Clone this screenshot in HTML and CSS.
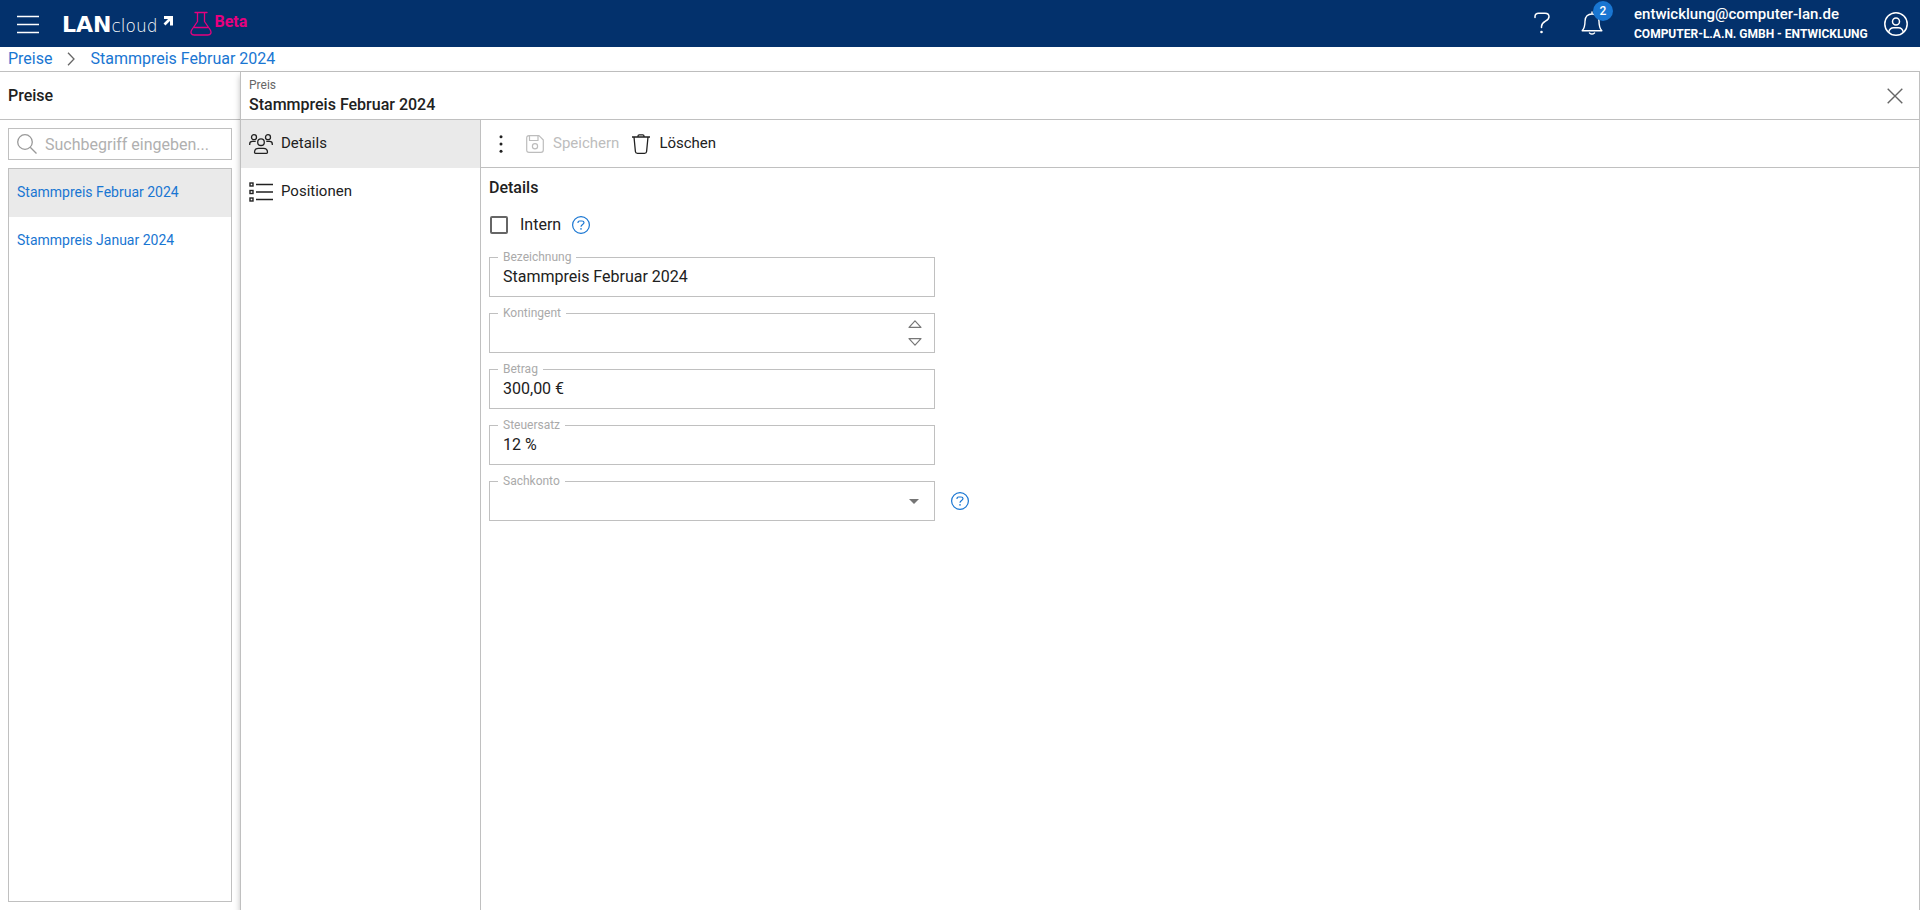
FILE: index.html
```html
<!DOCTYPE html>
<html lang="de">
<head>
<meta charset="utf-8">
<title>LANcloud – Stammpreis Februar 2024</title>
<link rel="stylesheet" href="styles.css">
</head>
<body>
<header class="topbar">
  <button class="icon-btn menu-btn" aria-label="Menü">
    <svg width="24" height="20" viewBox="0 0 24 20" fill="none" stroke="currentColor" stroke-width="1.4"><path d="M1 2.500h22M1 10.500h22M1 18.500h22"/></svg>
  </button>
  <a class="logo" href="#"><span class="logo-lan">LAN</span><span class="logo-cloud">cloud</span>
    <svg class="logo-arrow" width="10" height="10" viewBox="0 0 10 10" fill="none" stroke="currentColor"><path d="M1 1.500H8.500V9.500" stroke-width="3"/><path d="M1.500 8.500L7.500 2.500" stroke-width="2.600"/></svg>
  </a>
  <span class="beta">
    <svg width="22" height="25" viewBox="0 0 22 25" fill="none" stroke="currentColor" stroke-width="1.3" stroke-linecap="round" stroke-linejoin="round"><path d="M5 1.500H17M7.500 1.500V10.500L2 18.500C0 21.500 1.200 24 4.200 24H17.800C20.800 24 22 21.500 20 18.500L14.500 10.500V1.500M4.500 16.500H17.500"/></svg>
    <span class="beta-text">Beta</span>
  </span>
  <div class="topbar-right">
    <button class="icon-btn help-btn" aria-label="Hilfe">
      <svg width="18" height="22" viewBox="0 0 18 22" fill="none" stroke="currentColor" stroke-width="1.500" stroke-linecap="round"><path d="M2 5.500V4.500C2 2.500 3.500 1.200 5.500 1.200H12C14.500 1.200 16 2.700 16 4.700C16 9.500 8.500 9 8.500 14.500V15.500"/><circle cx="8.500" cy="20" r="1.300" fill="currentColor" stroke="none"/></svg>
    </button>
    <button class="icon-btn bell-btn" aria-label="Benachrichtigungen">
      <svg width="22" height="24" viewBox="0 0 22 24" fill="none" stroke="currentColor" stroke-width="1.400" stroke-linecap="round" stroke-linejoin="round"><path d="M11 1V3M1.200 19.800C3.200 17.500 4 15.500 4 10.200C4 5.500 7 3 11 3S18 5.500 18 10.200C18 15.500 18.800 17.500 20.800 19.800ZM8.500 22C10 23.300 12 23.300 13.500 22"/></svg>
      <span class="badge">2</span>
    </button>
    <div class="account"><span class="account-mail">entwicklung@computer-lan.de</span><span class="account-org">COMPUTER-L.A.N. GMBH - ENTWICKLUNG</span></div>
    <button class="icon-btn" aria-label="Konto">
      <svg width="24" height="24" viewBox="0 0 24 24" fill="none" stroke="currentColor" stroke-width="1.500"><circle cx="12" cy="12" r="11.200"/><circle cx="12" cy="9.500" r="3.500"/><path d="M4.700 20C5.500 17 7.500 15.800 9.500 15.800H14.500C16.500 15.800 18.500 17 19.300 20"/></svg>
    </button>
  </div>
</header>

<nav class="breadcrumb" aria-label="Brotkrumen">
  <a href="#">Preise</a>
  <svg width="8" height="14" viewBox="0 0 8 14" fill="none" stroke="currentColor" stroke-width="1.300"><path d="M1 .8L7 7L1 13.200"/></svg>
  <a href="#">Stammpreis Februar 2024</a>
</nav>

<div class="workspace">
  <aside class="master">
    <h2 class="master-title">Preise</h2>
    <div class="master-body">
      <label class="search">
        <svg width="20" height="20" viewBox="0 0 20 20" fill="none" stroke="currentColor" stroke-width="1.300"><circle cx="8" cy="8" r="7.300"/><path d="M13.200 13.200L19.500 19.500"/></svg>
        <input type="text" aria-label="Suche" placeholder="Suchbegriff eingeben...">
      </label>
      <div class="price-list">
        <a class="price-item selected" href="#">Stammpreis Februar 2024</a>
        <a class="price-item" href="#">Stammpreis Januar 2024</a>
      </div>
    </div>
  </aside>

  <main class="detail">
    <div class="detail-head">
      <div class="heading"><div class="kind">Preis</div><h1 class="detail-title">Stammpreis Februar 2024</h1></div>
      <button class="icon-btn close-btn" aria-label="Schließen">
        <svg width="16" height="16" viewBox="0 0 16 16" fill="none" stroke="currentColor" stroke-width="1.400"><path d="M.7 .7L15.300 15.300M15.300 .7L.7 15.300"/></svg>
      </button>
    </div>
    <div class="detail-body">
      <nav class="sections" aria-label="Bereiche">
        <a class="section-link selected" href="#">
          <svg width="24" height="20" viewBox="0 0 24 20" fill="none" stroke="currentColor" stroke-width="1.300"><circle cx="5" cy="3.200" r="2.500"/><circle cx="19" cy="3.200" r="2.500"/><circle cx="12" cy="8.200" r="3.300"/><path d="M.7 11V10C.7 8.300 2 7.400 3.500 7.400H6.700M23.300 11V10C23.300 8.300 22 7.400 20.500 7.400H17.300M5.500 18.300C5.500 15.500 7 14.300 9.500 14.300H14.500C17 14.300 18.500 15.500 18.500 18.300C18.500 19 18.200 19.300 17.500 19.300H6.500C5.800 19.300 5.500 19 5.500 18.300Z"/></svg>
          <span class="caption">Details</span>
        </a>
        <a class="section-link" href="#">
          <svg width="24" height="20" viewBox="0 0 24 20" fill="none" stroke="currentColor" stroke-width="1.400"><rect x="1" y="1" width="3" height="3"/><rect x="1" y="8.500" width="3" height="3"/><rect x="1" y="16" width="3" height="3"/><path d="M7 2.500H24M7 10H24M7 17.500H24"/></svg>
          <span class="caption">Positionen</span>
        </a>
      </nav>
      <div class="content">
        <div class="toolbar">
          <button class="icon-btn more-btn" aria-label="Mehr">
            <svg width="4" height="18" viewBox="0 0 4 18" fill="currentColor"><circle cx="2" cy="1.700" r="1.500"/><circle cx="2" cy="9" r="1.500"/><circle cx="2" cy="16.300" r="1.500"/></svg>
          </button>
          <button class="tool-btn save-btn" disabled>
            <svg width="18" height="18" viewBox="0 0 18 18" fill="none" stroke="currentColor" stroke-width="1.200" stroke-linejoin="round"><path d="M3 .7H13L17.300 5V15C17.300 16.500 16.500 17.300 15 17.300H3C1.500 17.300 .7 16.500 .7 15V3C.7 1.500 1.500 .7 3 .7ZM3.500 .7V5.500H12V.7"/><circle cx="9" cy="11.300" r="2.600"/></svg>
            <span class="caption">Speichern</span>
          </button>
          <button class="tool-btn delete-btn">
            <svg width="18" height="20" viewBox="0 0 18 20" fill="none" stroke="currentColor" stroke-width="1.300" stroke-linejoin="round"><path d="M0 3H18M6 3V2C6 1.200 6.500 .8 7.200 .8H10.800C11.500 .8 12 1.200 12 2V3M2 3L3.400 17.500C3.500 18.800 4.200 19.300 5.500 19.300H12.500C13.800 19.300 14.500 18.800 14.600 17.500L16 3"/></svg>
            <span class="caption">Löschen</span>
          </button>
        </div>
        <form class="form">
          <h2 class="form-title">Details</h2>
          <div class="check-row">
            <input type="checkbox" id="intern"><label for="intern">Intern</label>
            <button type="button" class="icon-btn hint" aria-label="Hilfe zu Intern">
              <svg width="18" height="18" viewBox="0 0 18 18" fill="none" stroke="currentColor" stroke-width="1.200"><circle cx="9" cy="9" r="8.400"/><path d="M6 7V6.500C6 5.500 6.500 5 7.500 5H10C11.300 5 12 5.600 12 6.500C12 8.500 9 8.300 9 10.700"/><circle cx="9" cy="12.900" r=".8" fill="currentColor" stroke="none"/></svg>
            </button>
          </div>
          <div class="field"><label for="bez">Bezeichnung</label><input id="bez" type="text" value="Stammpreis Februar 2024"></div>
          <div class="field"><label for="kont">Kontingent</label><input id="kont" type="text" inputmode="numeric">
            <div class="spinner">
              <button type="button" class="icon-btn" aria-label="Erhöhen"><svg width="14" height="8" viewBox="0 0 14 8" fill="none" stroke="currentColor" stroke-width="1.200" stroke-linejoin="round"><path d="M1 7.300H13L7 .8Z"/></svg></button>
              <button type="button" class="icon-btn" aria-label="Verringern"><svg width="14" height="8" viewBox="0 0 14 8" fill="none" stroke="currentColor" stroke-width="1.200" stroke-linejoin="round"><path d="M1 .7H13L7 7.200Z"/></svg></button>
            </div>
          </div>
          <div class="field"><label for="betrag">Betrag</label><input id="betrag" type="text" value="300,00 €"></div>
          <div class="field"><label for="steuer">Steuersatz</label><input id="steuer" type="text" value="12 %"></div>
          <div class="field-row">
            <div class="field"><label for="konto">Sachkonto</label><select id="konto"><option></option></select>
              <svg class="caret" width="10" height="5" viewBox="0 0 10 5" fill="currentColor"><path d="M0 0H10L5 5Z"/></svg>
            </div>
            <button type="button" class="icon-btn hint" aria-label="Hilfe zu Sachkonto">
              <svg width="18" height="18" viewBox="0 0 18 18" fill="none" stroke="currentColor" stroke-width="1.200"><circle cx="9" cy="9" r="8.400"/><path d="M6 7V6.500C6 5.500 6.500 5 7.500 5H10C11.300 5 12 5.600 12 6.500C12 8.500 9 8.300 9 10.700"/><circle cx="9" cy="12.900" r=".8" fill="currentColor" stroke="none"/></svg>
            </button>
          </div>
        </form>
      </div>
    </div>
  </main>
</div>
</body>
</html>
```

FILE: styles.css
```css
:root {
  --navy: #03316c;
  --blue: #1976d2;
  --line: #c0c0c0;
  --text: #212121;
  --selected: #eaeaea;
}

* { box-sizing: border-box; }

body {
  display: flex;
  flex-direction: column;
  min-height: 100vh;
  margin: 0;
  background: #fff;
  color: var(--text);
  font: 16px/24px Roboto, "Liberation Sans", sans-serif;
}

h1, h2 { margin: 0; font-size: 16px; font-weight: 500; }
a { color: var(--blue); text-decoration: none; }
svg { display: block; flex: none; }
input, select, button { font: inherit; color: inherit; }

.icon-btn {
  display: flex;
  padding: 0;
  border: 0;
  background: none;
}

/* Top bar */
.topbar {
  display: flex;
  align-items: center;
  height: 47px;
  padding: 0 12px 0 16px;
  background: var(--navy);
  color: #fff;
}
.menu-btn { padding-top: 1px; }
.logo {
  display: flex;
  align-items: baseline;
  padding-top: 3px;
  margin-left: 22px;
  color: #fff;
  font-family: "DejaVu Sans", sans-serif;
}
.logo-lan { font-size: 22px; font-weight: 700; }
.logo-cloud { font-size: 17px; font-weight: 200; }
.logo-arrow { align-self: flex-start; margin: 3px 0 0 5px; }
.beta {
  display: flex;
  gap: 3px;
  margin-left: 17px;
  color: #e6007e;
  font-weight: 700;
}
.beta-text { line-height: 22px; }
.topbar-right { display: flex; align-items: center; margin-left: auto; }
.bell-btn { position: relative; margin: 0 31px 0 30px; }
.help-btn, .bell-btn { margin-bottom: 2px; }
.badge {
  position: absolute;
  top: -10px;
  left: 12px;
  width: 20px;
  border-radius: 50%;
  background: var(--blue);
  font-size: 12px;
  font-weight: 500;
  line-height: 20px;
  text-align: center;
}
.account {
  display: flex;
  flex-direction: column;
  min-width: 238px;
  margin-right: 12px;
  line-height: 20px;
}
.account-mail { font-size: 15px; font-weight: 500; }
.account-org { font-size: 12px; font-weight: 700; }

/* Breadcrumb */
.breadcrumb {
  display: flex;
  align-items: center;
  gap: 15px;
  height: 25px;
  padding: 0 8px;
  border-bottom: 1px solid var(--line);
  color: #666;
}

.workspace { display: flex; flex: 1; }

/* Price list */
.master { display: flex; flex: none; flex-direction: column; width: 240px; }
.master-title {
  height: 48px;
  padding: 0 8px;
  border-bottom: 1px solid var(--line);
  line-height: 47px;
}
.master-body {
  display: flex;
  flex: 1;
  flex-direction: column;
  gap: 8px;
  padding: 8px;
}
.search {
  display: flex;
  align-items: center;
  gap: 8px;
  height: 32px;
  padding: 0 8px;
  border: 1px solid var(--line);
  color: #999;
}
.search input {
  width: 100%;
  min-width: 0;
  padding: 1px 0 0;
  border: 0;
  outline: 0;
}
.search input::placeholder { color: #b0b0b0; opacity: 1; }
.price-list { flex: 1; border: 1px solid var(--line); }
.price-item { display: block; padding: 0 8px 2px; font-size: 14px; line-height: 46px; }
.selected { background: var(--selected); }

/* Detail panel */
.detail {
  display: flex;
  flex: 1;
  flex-direction: column;
  border: solid var(--line);
  border-width: 0 1px;
  box-shadow: 0 4px 6px rgba(0, 0, 0, 0.25);
}
.detail-head {
  display: flex;
  align-items: center;
  justify-content: space-between;
  height: 48px;
  padding: 0 16px 0 8px;
  border-bottom: 1px solid var(--line);
}
.heading { padding-top: 2px; }
.kind { color: #666; font-size: 12px; line-height: 16px; }
.detail-title { line-height: 24px; }
.close-btn { color: #666; }
.detail-body { display: flex; flex: 1; }
.sections { flex: none; width: 240px; border-right: 1px solid var(--line); }
.section-link {
  display: flex;
  align-items: center;
  gap: 8px;
  height: 48px;
  padding: 0 8px;
  color: var(--text);
}
.caption { padding-bottom: 2px; font-size: 15px; }
.content { flex: 1; }
.toolbar {
  display: flex;
  align-items: center;
  height: 48px;
  padding-left: 18px;
  border-bottom: 1px solid var(--line);
}
.tool-btn {
  display: flex;
  align-items: center;
  gap: 9px;
  padding: 0;
  border: 0;
  background: none;
}
.save-btn { margin-left: 23px; color: #bdbdbd; }
.delete-btn { margin-left: 13px; }

/* Form */
.form { display: flex; flex-direction: column; gap: 16px; padding: 8px; }
.check-row {
  display: flex;
  align-items: center;
  height: 18px;
  margin-bottom: 7px;
}
.check-row input {
  appearance: none;
  width: 18px;
  height: 18px;
  margin: 0 12px 0 1px;
  border: 2px solid #666;
  border-radius: 2px;
}
.hint { color: var(--blue); }
.check-row .hint { margin-left: 11px; }
.field { position: relative; width: 100%; max-width: 446px; }
.field label {
  position: absolute;
  top: -8px;
  left: 9px;
  padding: 0 5px;
  background: #fff;
  color: #aaa;
  font-size: 12px;
  line-height: 16px;
}
.field input, .field select {
  display: block;
  width: 100%;
  height: 40px;
  padding: 0 13px 2px;
  border: 1px solid var(--line);
  border-radius: 0;
  outline: 0;
  background: #fff;
  appearance: none;
}
.spinner {
  position: absolute;
  top: 7px;
  right: 13px;
  display: grid;
  gap: 10px;
  color: #777;
}
.caret { position: absolute; top: 18px; right: 16px; color: #757575; }
.field-row { display: flex; align-items: center; gap: 16px; }
```
